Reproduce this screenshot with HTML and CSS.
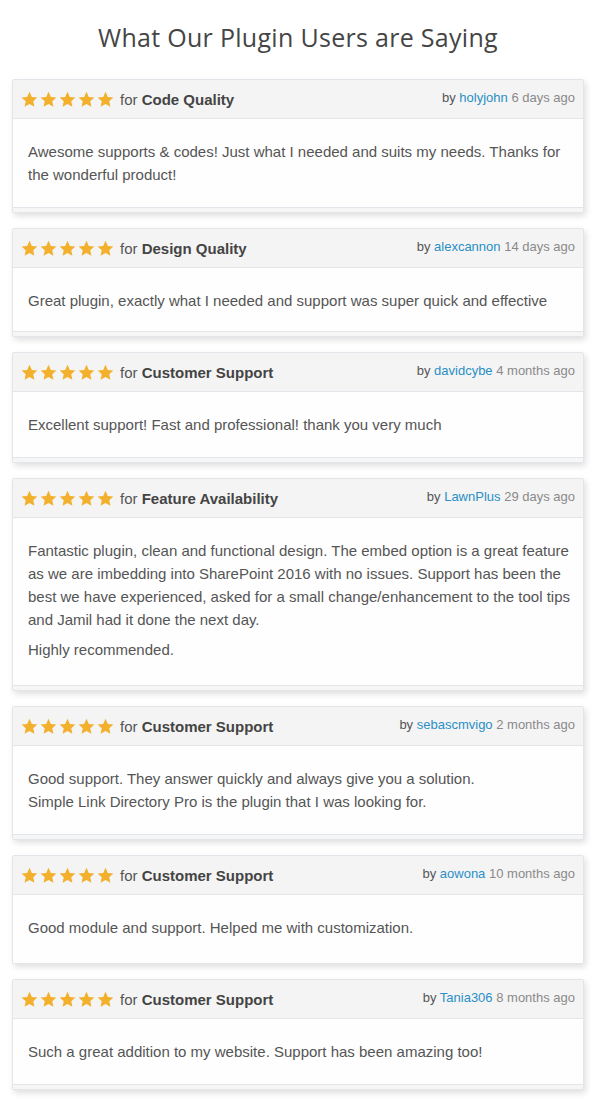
FILE: index.html
```html
<!DOCTYPE html>
<html lang="en">
<head>
<meta charset="utf-8">
<title>What Our Plugin Users are Saying</title>
<link rel="stylesheet" href="styles.css">
</head>
<body>
<svg width="0" height="0" class="defs" aria-hidden="true">
  <defs>
    <symbol id="star" viewBox="0 0 24 24">
      <path d="M12 1.2l3.3 7.1 7.8.9-5.8 5.3 1.6 7.7L12 18.3l-6.9 3.9 1.6-7.7L.9 9.2l7.8-.9z"/>
    </symbol>
  </defs>
</svg>
<main class="page">
  <h1 class="title">What Our Plugin Users are Saying</h1>

  <article class="review">
    <header class="review-head">
      <div class="rating">
        <span class="stars"><svg><use href="#star"/></svg><svg><use href="#star"/></svg><svg><use href="#star"/></svg><svg><use href="#star"/></svg><svg><use href="#star"/></svg></span>
        <span class="for">for <b>Code Quality</b></span>
      </div>
      <div class="meta">by <a href="#">holyjohn</a> <span class="ago">6 days ago</span></div>
    </header>
    <div class="review-body">
      <p>Awesome supports &amp; codes! Just what I needed and suits my needs. Thanks for the wonderful product!</p>
    </div>
    <footer class="review-foot"></footer>
  </article>

  <article class="review review--tight">
    <header class="review-head">
      <div class="rating">
        <span class="stars"><svg><use href="#star"/></svg><svg><use href="#star"/></svg><svg><use href="#star"/></svg><svg><use href="#star"/></svg><svg><use href="#star"/></svg></span>
        <span class="for">for <b>Design Quality</b></span>
      </div>
      <div class="meta">by <a href="#">alexcannon</a> <span class="ago">14 days ago</span></div>
    </header>
    <div class="review-body">
      <p>Great plugin, exactly what I needed and support was super quick and effective</p>
    </div>
    <footer class="review-foot"></footer>
  </article>

  <article class="review">
    <header class="review-head">
      <div class="rating">
        <span class="stars"><svg><use href="#star"/></svg><svg><use href="#star"/></svg><svg><use href="#star"/></svg><svg><use href="#star"/></svg><svg><use href="#star"/></svg></span>
        <span class="for">for <b>Customer Support</b></span>
      </div>
      <div class="meta">by <a href="#">davidcybe</a> <span class="ago">4 months ago</span></div>
    </header>
    <div class="review-body">
      <p>Excellent support! Fast and professional! thank you very much</p>
    </div>
    <footer class="review-foot"></footer>
  </article>

  <article class="review review--loose">
    <header class="review-head">
      <div class="rating">
        <span class="stars"><svg><use href="#star"/></svg><svg><use href="#star"/></svg><svg><use href="#star"/></svg><svg><use href="#star"/></svg><svg><use href="#star"/></svg></span>
        <span class="for">for <b>Feature Availability</b></span>
      </div>
      <div class="meta">by <a href="#">LawnPlus</a> <span class="ago">29 days ago</span></div>
    </header>
    <div class="review-body">
      <p>Fantastic plugin, clean and functional design. The embed option is a great feature as we are imbedding into SharePoint 2016 with no issues. Support has been the best we have experienced, asked for a small change/enhancement to the tool tips and Jamil had it done the next day.</p>
      <p>Highly recommended.</p>
    </div>
    <footer class="review-foot"></footer>
  </article>

  <article class="review">
    <header class="review-head">
      <div class="rating">
        <span class="stars"><svg><use href="#star"/></svg><svg><use href="#star"/></svg><svg><use href="#star"/></svg><svg><use href="#star"/></svg><svg><use href="#star"/></svg></span>
        <span class="for">for <b>Customer Support</b></span>
      </div>
      <div class="meta">by <a href="#">sebascmvigo</a> <span class="ago">2 months ago</span></div>
    </header>
    <div class="review-body">
      <p>Good support. They answer quickly and always give you a solution.<br>Simple Link Directory Pro is the plugin that I was looking for.</p>
    </div>
    <footer class="review-foot"></footer>
  </article>

  <article class="review review--loose">
    <header class="review-head">
      <div class="rating">
        <span class="stars"><svg><use href="#star"/></svg><svg><use href="#star"/></svg><svg><use href="#star"/></svg><svg><use href="#star"/></svg><svg><use href="#star"/></svg></span>
        <span class="for">for <b>Customer Support</b></span>
      </div>
      <div class="meta">by <a href="#">aowona</a> <span class="ago">10 months ago</span></div>
    </header>
    <div class="review-body">
      <p>Good module and support. Helped me with customization.</p>
    </div>
  </article>

  <article class="review">
    <header class="review-head">
      <div class="rating">
        <span class="stars"><svg><use href="#star"/></svg><svg><use href="#star"/></svg><svg><use href="#star"/></svg><svg><use href="#star"/></svg><svg><use href="#star"/></svg></span>
        <span class="for">for <b>Customer Support</b></span>
      </div>
      <div class="meta">by <a href="#">Tania306</a> <span class="ago">8 months ago</span></div>
    </header>
    <div class="review-body">
      <p>Such a great addition to my website. Support has been amazing too!</p>
    </div>
    <footer class="review-foot"></footer>
  </article>
</main>
</body>
</html>
```

FILE: styles.css
```css
html, body {
  margin: 0;
  padding: 0;
  background: #ffffff;
}

.defs {
  position: absolute;
  width: 0;
  height: 0;
  overflow: hidden;
}

.page {
  width: 572px;
  padding: 0 0 12px 12px;
  font-family: "Liberation Sans", Arial, sans-serif;
  display: flex;
  flex-direction: column;
  gap: 15px;
}

.title {
  margin: 0;
  padding: 20px 0 10px;
  text-align: center;
  font-family: "Open Sans", "Liberation Sans", sans-serif;
  font-weight: 400;
  font-size: 25px;
  line-height: 34px;
  letter-spacing: 0.3px;
  color: #454545;
}

.review {
  border: 1px solid #e2e6ea;
  border-radius: 2px;
  background: #ffffff;
  box-shadow: 2px 3px 6px rgba(0, 0, 0, 0.13);
}

.review-head {
  height: 38px;
  background: #f4f4f4;
  border-bottom: 1px solid #e2e6ea;
  display: flex;
  align-items: center;
  justify-content: space-between;
  padding: 0 8px 0 8px;
}

.rating {
  display: flex;
  align-items: center;
  gap: 6px;
}

.stars {
  display: flex;
  gap: 2px;
}

.stars svg {
  width: 17px;
  height: 17px;
  fill: #f2b02c;
  display: block;
}

.for {
  font-size: 15px;
  color: #555555;
}

.for b {
  color: #444444;
  font-weight: 700;
}

.meta {
  font-size: 13px;
  color: #555555;
  margin-top: -4px;
}

.meta a {
  color: #2a8fc5;
  text-decoration: none;
}

.meta .ago {
  color: #8a8a8a;
}

.review-body {
  padding: 21px 10px 21px 15px;
  background: #fefefe;
}

.review--tight .review-body {
  padding-bottom: 19px;
}

.review--loose .review-body {
  padding-bottom: 24px;
}

.review-body p {
  margin: 0;
  font-size: 15px;
  line-height: 23px;
  color: #555555;
}

.review-body p + p {
  margin-top: 7px;
}

.review-foot {
  height: 4px;
  background: #f6f6f6;
  border-top: 1px solid #e2e6ea;
}
```
